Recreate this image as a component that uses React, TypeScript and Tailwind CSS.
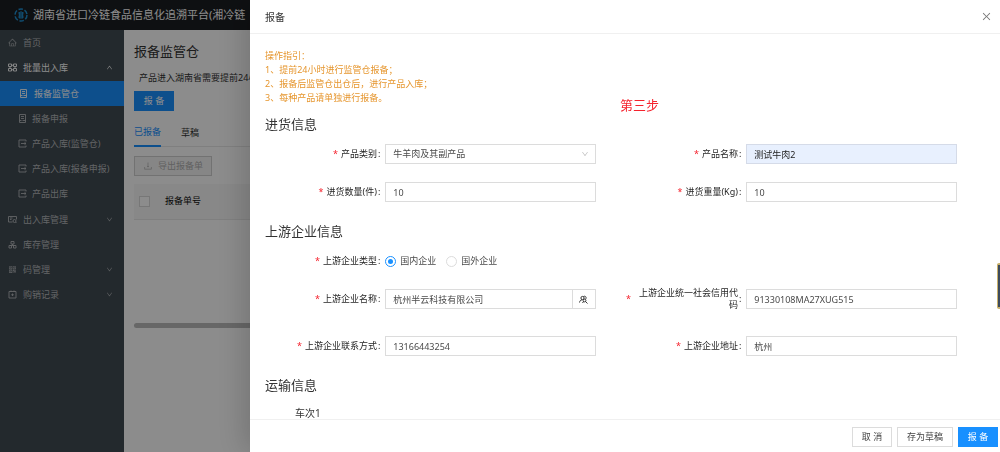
import React from "react";
import {
  AiOutlineHome,
  AiOutlineQrcode,
  AiOutlineDownload,
  AiOutlineClose,
  AiOutlineDown,
  AiOutlineUp,
} from "react-icons/ai";

type IconProps = { className?: string };

const stroke = {
  viewBox: "0 0 18 18",
  fill: "none",
  stroke: "currentColor",
  strokeWidth: 1.8,
} as const;

const Blocks = ({ className }: IconProps) => (
  <svg {...stroke} className={className}>
    <path d="M1 2h6v5H1zM11 2h6v5h-6zM1 11h6v5H1zM11 11h6v5h-6zM7 4.500h4M7 13.500h4M4 7v4M14 7v4" />
  </svg>
);
const Report = ({ className }: IconProps) => (
  <svg {...stroke} className={className}>
    <path d="M3 1h12v16H3zM6 5h6M6 9h6M3 13h4M9 13h6" />
  </svg>
);
const Enter = ({ className }: IconProps) => (
  <svg {...stroke} className={className}>
    <path d="M16 5V2H2v14h14v-3M6 9h10M13 6.500l3 2.500-3 2.500" />
  </svg>
);
const Monitor = ({ className }: IconProps) => (
  <svg {...stroke} className={className}>
    <path d="M9 14H1V3h16v6M4 6h5M4 9h3" />
    <circle cx="13" cy="12" r="3" />
    <path d="M15 14l2 2" />
  </svg>
);
const Stock = ({ className }: IconProps) => (
  <svg {...stroke} className={className}>
    <path d="M6 3h6v5H6zM2 11h5v5H2zM11 11h5v5h-5zM9 8v3M4 11h10" />
  </svg>
);
const Ledger = ({ className }: IconProps) => (
  <svg {...stroke} className={className}>
    <path d="M2 3h14v13H2zM6 1v3M12 1v3M6.500 9.500h5M9 7v5" />
  </svg>
);
const PersonSearch = ({ className }: IconProps) => (
  <svg {...stroke} className={className}>
    <circle cx="7" cy="6" r="3.200" />
    <path d="M1 15c.5-3 2-5 5-5.500M9 3c4-2 7 2 4 5.500" />
    <circle cx="11" cy="11" r="2.800" />
    <path d="M13 13l4 4M7 16l2-3" />
  </svg>
);
const Logo = ({ className }: IconProps) => (
  <svg viewBox="0 0 28 28" fill="none" stroke="#1f8fd0" className={className}>
    <circle cx="14" cy="14" r="12" strokeWidth="3" strokeDasharray="9 3.500" />
    <path d="M8 10h12M9 14h10M8 18h12M11 8v13M14 6v16M17 8v13" strokeWidth="1.800" />
  </svg>
);

type Item = {
  label: string;
  Icon: React.ComponentType<IconProps>;
  arrow?: boolean;
  active?: boolean;
};

const subItems: Item[] = [
  { label: "报备监管仓", Icon: Report, active: true },
  { label: "报备申报", Icon: Report },
  { label: "产品入库(监管仓)", Icon: Enter },
  { label: "产品入库(报备申报)", Icon: Enter },
  { label: "产品出库", Icon: Enter },
];
const lowerItems: Item[] = [
  { label: "出入库管理", Icon: Monitor, arrow: true },
  { label: "库存管理", Icon: Stock },
  { label: "码管理", Icon: AiOutlineQrcode, arrow: true },
  { label: "购销记录", Icon: Ledger, arrow: true },
];

function MenuItem({ label, Icon, arrow }: Item) {
  return (
    <a href="#" className="flex h-[25px] items-center pl-2 pr-[11px]">
      <Icon className="size-[9px] shrink-0" />
      <span className="ml-[6px] grow">{label}</span>
      {arrow && <AiOutlineDown className="size-[7px]" />}
    </a>
  );
}

function Field({
  id,
  label,
  children,
}: {
  id: string;
  label: string;
  children: React.ReactNode;
}) {
  return (
    <div className="flex items-center">
      <label
        htmlFor={id}
        className="flex w-1/3 items-center justify-end leading-3 text-[#262626]"
      >
        <span className="mr-[3px] shrink-0 text-[#f5222d]">*</span>
        <span className="text-right">{label}</span>
        <span className="ml-px mr-[5px] shrink-0">:</span>
      </label>
      <div className="flex w-7/12">{children}</div>
    </div>
  );
}

function TextInput({ id, value, tint }: { id: string; value: string; tint?: boolean }) {
  return (
    <input
      id={id}
      defaultValue={value}
      className={
        tint
          ? "h-5 w-full min-w-0 border border-[#d5dbe8] bg-[#e8f0fe] px-[7px] text-[#222]"
          : "h-5 w-full min-w-0 border border-[#dcdcdc] bg-white px-[7px]"
      }
    />
  );
}

function Radio({ label, checked }: { label: string; checked?: boolean }) {
  return (
    <label className="flex items-center gap-1">
      <input
        type="radio"
        name="companyType"
        defaultChecked={checked}
        className="size-[11px] appearance-none rounded-full border border-[#dcdcdc] bg-white p-[2px] before:block before:size-full before:rounded-full checked:border-[#1890ff] checked:before:bg-[#1890ff]"
      />
      {label}
    </label>
  );
}

const heading = "text-[13px] leading-5 text-[#333]";
const row = "grid grid-cols-2";
const plainButton = "h-5 border border-[#dcdcdc] bg-white text-[#444]";

export default function App() {
  return (
    <div className="flex h-screen flex-col overflow-hidden bg-white font-['Noto_Sans','Noto_Sans_CJK_SC',sans-serif] text-[9px] leading-[14px] text-[#4a4a4a]">
      <header className="flex h-[30px] shrink-0 items-center gap-[5px] bg-[#1b1e22] pl-[14px] text-[11px] whitespace-nowrap text-white">
        <Logo className="size-[14px]" />
        <h1>湖南省进口冷链食品信息化追溯平台(湘冷链</h1>
      </header>

      <div className="flex min-h-0 grow">
        <nav className="w-[124px] shrink-0 bg-[#414b52] whitespace-nowrap text-[#b4b8bb]">
          <MenuItem label="首页" Icon={AiOutlineHome} />
          <a href="#" className="flex h-[25px] items-center pl-2 pr-[11px] text-white">
            <Blocks className="size-[9px]" />
            <span className="ml-[6px] grow">批量出入库</span>
            <AiOutlineUp className="size-[7px]" />
          </a>
          <div className="py-px">
            {subItems.map(({ label, Icon, active }) => (
              <a
                href="#"
                key={label}
                className={
                  active
                    ? "flex h-[25px] items-center gap-[6px] bg-[#1890ff] pl-[19px] text-white"
                    : "flex h-[25px] items-center gap-[5px] pl-[18px]"
                }
              >
                <Icon className="size-[9px] shrink-0" />
                {label}
              </a>
            ))}
          </div>
          {lowerItems.map((item) => (
            <MenuItem key={item.label} {...item} />
          ))}
        </nav>

        <main className="min-w-0 grow overflow-hidden pl-[10px] pt-[11px] whitespace-nowrap">
          <h2 className={heading}>报备监管仓</h2>
          <p className="mt-[10px] pl-[5px] text-[#333]">产品进入湖南省需要提前24小</p>
          <button className="mt-[6px] block h-5 w-10 bg-[#1890ff] text-white">报 备</button>
          <div className="mt-[14px] flex gap-5 border-b border-[#e8e8e8] text-[#333]">
            <button className="-mb-px border-b-2 border-[#1890ff] pb-[6px] text-[#1890ff]">已报备</button>
            <button className="pb-[6px]">草稿</button>
          </div>
          <button
            disabled
            className="mt-[9px] flex h-5 w-[78px] items-center justify-center gap-[5px] border border-[#d0d0d0] bg-[#f5f5f5] text-[#b0b0b0]"
          >
            <AiOutlineDownload className="size-[10px]" />
            导出报备单
          </button>
          <table className="mt-2 w-full border-b border-[#e8e8e8] bg-[#f7f7f7] text-left text-[#111]">
            <thead>
              <tr className="h-[35px]">
                <th className="w-[31px] pl-[5px]">
                  <input
                    type="checkbox"
                    aria-label="全选"
                    className="block size-[11px] appearance-none border border-[#d9d9d9] bg-white"
                  />
                </th>
                <th className="font-normal">报备单号</th>
              </tr>
            </thead>
          </table>
          <div className="mt-[103px] h-[5px] rounded-l-full bg-[#bcbcbc]" />
        </main>
      </div>

      <div className="fixed inset-0 bg-black/45" />

      <section
        role="dialog"
        aria-labelledby="drawer-title"
        className="fixed inset-y-0 right-0 flex w-3/4 flex-col bg-white shadow-[-4px_0_30px_rgba(0,0,0,0.2)]"
      >
        <div className="flex h-[34px] shrink-0 items-center justify-between border-b border-[#f0f0f0] pl-[15px] pr-2">
          <h2 id="drawer-title" className="text-[10px] text-[#333]">报备</h2>
          <button aria-label="关闭">
            <AiOutlineClose className="size-[11px] text-[#777]" />
          </button>
        </div>

        <form className="min-h-0 grow overflow-y-auto pl-[15px] pr-[13px] pt-[15px] [scrollbar-width:none]">
          <div className="text-[#e6962e]">
            <p>操作指引：</p>
            <p>1、提前24小时进行监管仓报备；</p>
            <p>2、报备后监管仓出仓后，进行产品入库；</p>
            <p>3、每种产品请单独进行报备。</p>
          </div>

          <h3 className={`mt-[9px] ${heading}`}>进货信息</h3>
          <div className={`mt-[10px] ${row}`}>
            <Field id="category" label="产品类别">
              <div className="relative w-full">
                <select
                  id="category"
                  className="block h-5 w-full appearance-none border border-[#dcdcdc] bg-white px-[7px]"
                >
                  <option>牛羊肉及其副产品</option>
                </select>
                <AiOutlineDown className="pointer-events-none absolute top-[6px] right-[7px] size-2 text-[#bfbfbf]" />
              </div>
            </Field>
            <Field id="name" label="产品名称">
              <TextInput id="name" value="测试牛肉2" tint />
            </Field>
          </div>
          <div className={`mt-[18px] ${row}`}>
            <Field id="count" label="进货数量(件)">
              <TextInput id="count" value="10" />
            </Field>
            <Field id="weight" label="进货重量(Kg)">
              <TextInput id="weight" value="10" />
            </Field>
          </div>

          <h3 className={`mt-[19px] ${heading}`}>上游企业信息</h3>
          <fieldset className={`mt-[10px] ${row}`}>
            <div className="flex h-5 items-center">
              <span className="flex w-1/3 justify-end text-[#262626]">
                <span className="mr-[3px] text-[#f5222d]">*</span>
                上游企业类型
                <span className="ml-px mr-[5px]">:</span>
              </span>
              <div className="flex w-7/12 gap-[10px]">
                <Radio label="国内企业" checked />
                <Radio label="国外企业" />
              </div>
            </div>
          </fieldset>
          <div className={`mt-[16px] ${row}`}>
            <Field id="company" label="上游企业名称">
              <TextInput id="company" value="杭州半云科技有限公司" />
              <button
                type="button"
                aria-label="选择企业"
                className="-ml-px flex h-5 w-6 shrink-0 items-center justify-center border border-[#dcdcdc]"
              >
                <PersonSearch className="size-[9px] text-[#222]" />
              </button>
            </Field>
            <Field id="credit" label="上游企业统一社会信用代码">
              <TextInput id="credit" value="91330108MA27XUG515" />
            </Field>
          </div>
          <div className={`mt-[25px] ${row}`}>
            <Field id="contact" label="上游企业联系方式">
              <TextInput id="contact" value="13166443254" />
            </Field>
            <Field id="address" label="上游企业地址">
              <TextInput id="address" value="杭州" />
            </Field>
          </div>

          <h3 className={`mt-[19px] ${heading}`}>运输信息</h3>
          <h4 className="mt-[11px] pl-[30px] text-[10px] text-[#333]">车次1</h4>
        </form>

        <div className="flex h-[33px] shrink-0 items-center justify-end gap-[5px] border-t border-[#f0f0f0] pr-[2px] pt-px">
          <button className={`${plainButton} w-10`}>取 消</button>
          <button className={`${plainButton} w-14`}>存为草稿</button>
          <button className="h-5 w-10 bg-[#1890ff] text-white">报 备</button>
        </div>

        <p className="absolute top-[95px] left-[370px] text-[13px] leading-5 text-[#f5222d]">第三步</p>
        <div className="absolute top-[263px] right-0 h-[46px] w-[3px] rounded-l-[2px] border-y-2 border-l border-[#c9b06a] bg-[#3c4a5c]" />
      </section>
    </div>
  );
}
